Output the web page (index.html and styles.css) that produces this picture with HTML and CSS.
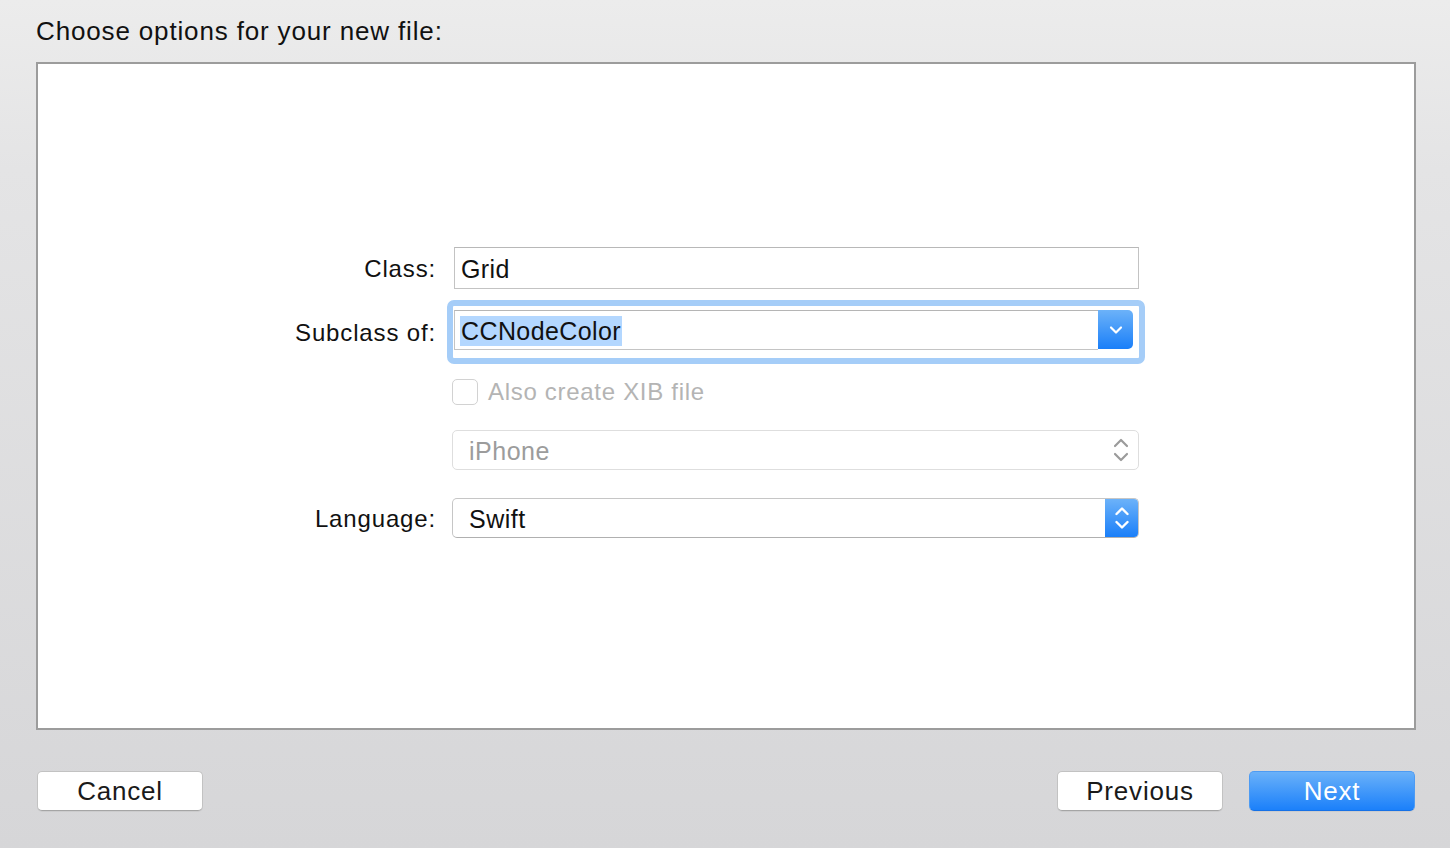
FILE: index.html
```html
<!DOCTYPE html>
<html>
<head>
<meta charset="utf-8">
<link rel="stylesheet" href="styles.css">
</head>
<body>
<div class="sheet">
  <div class="title">Choose options for your new file:</div>
  <div class="panel">
    <div class="form">
      <div class="label row-class">Class:</div>
      <div class="field row-class">
        <div class="textfield">Grid</div>
      </div>

      <div class="label row-sub">Subclass of:</div>
      <div class="field row-sub">
        <div class="focus-ring">
          <div class="combo">
            <div class="combo-text"><span class="sel">CCNodeColor</span></div>
            <div class="combo-btn">
              <svg width="16" height="10" viewBox="0 0 16 10"><path d="M3 2.5 L8 7.5 L13 2.5" fill="none" stroke="#fff" stroke-width="2.2" stroke-linecap="round" stroke-linejoin="round"/></svg>
            </div>
          </div>
        </div>
      </div>

      <div class="label row-check"></div>
      <div class="field row-check">
        <div class="check-wrap">
          <span class="checkbox"></span>
          <span class="check-label">Also create XIB file</span>
        </div>
      </div>

      <div class="label row-device"></div>
      <div class="field row-device">
        <div class="popup disabled">
          <span class="popup-text">iPhone</span>
          <span class="arrows grey">
            <svg width="18" height="28" viewBox="0 0 18 28"><path d="M3 10 L9 4 L15 10 M3 18 L9 24 L15 18" fill="none" stroke="#9b9b9b" stroke-width="2.2" stroke-linecap="round" stroke-linejoin="round"/></svg>
          </span>
        </div>
      </div>

      <div class="label row-lang">Language:</div>
      <div class="field row-lang">
        <div class="popup">
          <span class="popup-text">Swift</span>
          <span class="arrows blue">
            <svg width="18" height="28" viewBox="0 0 18 28"><path d="M3.5 10 L9 4.5 L14.5 10 M3.5 18 L9 23.5 L14.5 18" fill="none" stroke="#fff" stroke-width="2.4" stroke-linecap="round" stroke-linejoin="round"/></svg>
          </span>
        </div>
      </div>
    </div>
  </div>
  <div class="footer">
    <button class="btn">Cancel</button>
    <div class="spacer"></div>
    <button class="btn">Previous</button>
    <button class="btn primary">Next</button>
  </div>
</div>
</body>
</html>
```

FILE: styles.css
```css
html, body {
  margin: 0;
  padding: 0;
}
body {
  width: 1450px;
  height: 848px;
  overflow: hidden;
  background: linear-gradient(to bottom, #ececec 0%, #e4e4e5 20%, #d6d6d8 100%);
  font-family: "Liberation Sans", Arial, sans-serif;
  color: #111;
}
.sheet {
  display: flex;
  flex-direction: column;
  padding-left: 36px;
  width: 1380px;
}
.title {
  height: 62px;
  box-sizing: border-box;
  padding-top: 16px;
  font-size: 26px;
  line-height: 30px;
  color: #111;
  letter-spacing: 0.85px;
}
.panel {
  height: 668px;
  box-sizing: border-box;
  border: 2px solid #9c9c9c;
  background: #fff;
}
.form {
  display: grid;
  grid-template-columns: 398px 710px;
  column-gap: 14px;
  padding-top: 183px;
}
.label {
  display: flex;
  align-items: center;
  justify-content: flex-end;
  font-size: 24px;
  padding-top: 2px;
  box-sizing: border-box;
  color: #111;
  letter-spacing: 0.85px;
}
.field {
  display: flex;
  align-items: center;
}
.field > * { flex-shrink: 0; }
.row-class { height: 42px; margin-bottom: 11px; }
.row-sub { height: 64px; margin-bottom: 14px; }
.row-check { height: 27px; margin-bottom: 25px; }
.row-device { height: 40px; margin-bottom: 28px; }
.row-lang { height: 40px; }

.textfield {
  margin-left: 4px;
  width: 685px;
  height: 42px;
  box-sizing: border-box;
  border: 1px solid #c3c3c3;
  border-top-color: #b8b8b8;
  background: #fff;
  font-size: 25px;
  line-height: 42px;
  padding-left: 6px;
  color: #111;
  letter-spacing: 0.4px;
}
.focus-ring {
  margin-left: -3px;
  width: 698px;
  height: 64px;
  box-sizing: border-box;
  border: 6px solid #a5cdf8;
  border-radius: 7px;
  padding: 4px 6px 4px 1px;
  background: #fff;
}
.combo {
  display: flex;
  height: 40px;
}
.combo-text {
  flex: 1;
  box-sizing: border-box;
  border: 1px solid #c4c4c4;
  border-right: none;
  border-top-color: #b5b5b5;
  font-size: 25px;
  line-height: 40px;
  padding-left: 5px;
  letter-spacing: 0.4px;
}
.sel {
  background: #b3d7ff;
  padding: 1px 1px;
}
.combo-btn {
  width: 35px;
  height: 39px;
  border-radius: 0 5px 5px 0;
  background: linear-gradient(to bottom, #6cb2f9, #1a7ff9);
  display: flex;
  align-items: center;
  justify-content: center;
}
.check-wrap {
  display: flex;
  align-items: center;
  margin-left: 2px;
}
.checkbox {
  width: 26px;
  height: 26px;
  box-sizing: border-box;
  border: 1px solid #d2d2d2;
  border-radius: 5px;
  background: #fff;
}
.check-label {
  margin-left: 10px;
  font-size: 24px;
  color: #b4b4b4;
  letter-spacing: 0.7px;
}
.popup {
  margin-left: 2px;
  width: 687px;
  height: 40px;
  box-sizing: border-box;
  border: 1px solid #c6c6c6;
  border-bottom-color: #b0b0b0;
  border-radius: 5px;
  display: flex;
  align-items: center;
  background: #fff;
  overflow: hidden;
}
.popup.disabled {
  border-color: #dedede;
}
.popup-text {
  flex: 1;
  padding-left: 16px;
  padding-top: 2px;
  font-size: 25px;
  color: #111;
  letter-spacing: 0.5px;
}
.popup.disabled .popup-text {
  color: #9c9c9c;
}
.arrows {
  display: flex;
  align-items: center;
  justify-content: center;
  height: 100%;
}
.arrows.grey {
  width: 34px;
}
.arrows.blue {
  width: 33px;
  background: linear-gradient(to bottom, #6cb2f9, #1a7ff9);
}
.footer {
  display: flex;
  align-items: flex-start;
  padding-top: 41px;
  padding-left: 1px;
  padding-right: 1px;
}
.spacer { flex: 1; }
.btn {
  width: 166px;
  height: 40px;
  box-sizing: border-box;
  border: 1px solid #c2c2c2;
  border-bottom-color: #a5a5a5;
  border-radius: 5px;
  background: #fff;
  font-family: "Liberation Sans", Arial, sans-serif;
  font-size: 26px;
  color: #1a1a1a;
  padding: 0;
  letter-spacing: 0.8px;
  box-shadow: 0 1px 0 rgba(0,0,0,0.05);
}
.btn + .btn { margin-left: 26px; }
.btn.primary {
  border: 1px solid #4d9bf3;
  border-bottom-color: #1671e6;
  background: linear-gradient(to bottom, #6ab1f9, #1b80fa);
  color: #fff;
}
```
